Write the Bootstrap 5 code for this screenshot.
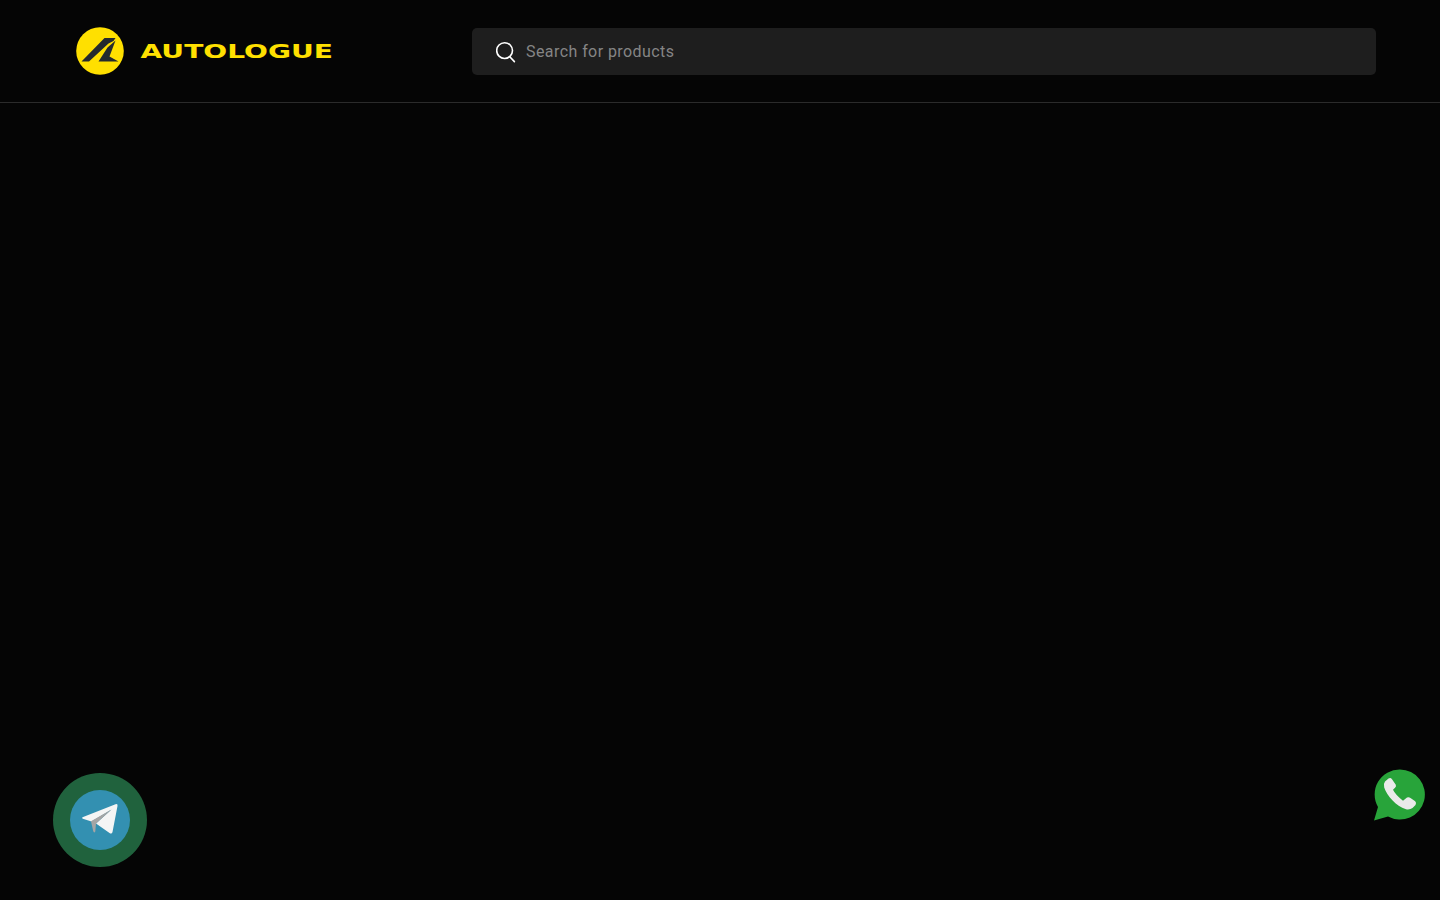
<!DOCTYPE html>
<html lang="en">
<head>
<meta charset="utf-8">
<meta name="viewport" content="width=device-width, initial-scale=1">
<title>Autologue</title>
<link rel="stylesheet" href="https://cdn.jsdelivr.net/npm/bootstrap@5.3.0/dist/css/bootstrap.min.css">
<style>
  body { background: #050505; font-family: Roboto, "Liberation Sans", sans-serif; }
  .site-header { height: 103px; border-bottom: 1px solid #2b2b2b; padding: 0 64px 0 76px; }
  .brand-col { width: 396px; }
  .search-box { height: 47px; background: #1e1e1e; border-radius: 5px; padding: 1px 24px 0; }
  .search-box input { color: #fff; font-size: 16px; letter-spacing: .43px; margin-left: 10px; outline: 0; }
  .search-box input::placeholder { color: #858585; opacity: 1; }
  .telegram-btn { left: 53px; bottom: 33px; width: 94px; height: 94px; background: #20623d; }
  .whatsapp-btn { left: 1373px; bottom: 79px; }
  svg { display: block; }
</style>
</head>
<body class="vh-100 overflow-hidden">
<header class="site-header d-flex align-items-center">
  <a href="#" class="brand-col d-flex align-items-center flex-shrink-0" aria-label="Autologue home">
    <svg width="260" height="48" viewBox="0 0 260 48">
      <circle cx="24" cy="24" r="23.800" fill="#ffe000"/>
      <path fill="#242a2e" d="M5.500 34.500 28.500 11H39.500L37.500 14 32.500 16.500 13 34.500ZM39.500 13.500 33.500 29.500 42.500 34.500H22.500L31.500 20.500Z"/>
      <text x="64.500" y="31" textLength="192.500" lengthAdjust="spacingAndGlyphs" font-family="'DejaVu Sans', sans-serif" font-weight="700" font-size="19.500" fill="#ffe000">AUTOLOGUE</text>
    </svg>
  </a>
  <form class="search-box d-flex align-items-center flex-grow-1" role="search">
    <svg width="20" height="22" viewBox="0 0 20 22" fill="none" stroke="#fff" stroke-width="1.6" stroke-linecap="round"><circle cx="8.6" cy="9.6" r="7.9"/><path d="m13.8 15.7 4.6 4.900"/></svg>
    <input class="flex-grow-1 bg-transparent border-0 p-0" type="text" placeholder="Search for products" aria-label="Search for products">
  </form>
</header>
<a href="#" class="telegram-btn position-fixed rounded-circle d-flex align-items-center justify-content-center" aria-label="Telegram">
  <svg width="60" height="60" viewBox="0 0 60 60">
    <circle cx="30" cy="30" r="30" fill="#3390b1"/>
    <path fill="#f5f5f5" d="M12.500 27.200 45.500 14.200Q48 13.500 47.500 16L42.500 42Q41.800 44.500 39.500 43L26 33.500 41.500 19.500 21.500 31.500 12.800 28.700Q11.500 28 12.500 27.200Z"/>
    <path fill="#a5a5a5" d="M21 31.200 41.500 19.500 26 33.500 25.300 41.500Q24 43.500 23.200 41Z"/>
  </svg>
</a>
<a href="#" class="whatsapp-btn position-fixed" aria-label="WhatsApp">
  <svg width="53" height="52" viewBox="0 0 53 52">
    <path fill="#28a43a" d="M27 .5a25 25 0 1 1-12 47L1 51.500 5 38A25 25 0 0 1 27 .5Z"/>
    <path fill="#eaeaea" d="M12 12.500 15.500 9.600Q17.500 8.400 19 10.200L22.800 15.700Q23.500 17.500 22 18.800L20 20.800Q22.500 26 30 31.700L34 28.600Q35.800 27.700 37.500 29L42.200 32.200Q43.800 33.800 42.500 36L39.500 39Q37 41 33 40.300C23 37 14 27 11.200 18.500Q10.300 14.500 12 12.500Z"/>
  </svg>
</a>
<script src="https://cdn.jsdelivr.net/npm/bootstrap@5.3.0/dist/js/bootstrap.bundle.min.js"></script>
</body>
</html>
